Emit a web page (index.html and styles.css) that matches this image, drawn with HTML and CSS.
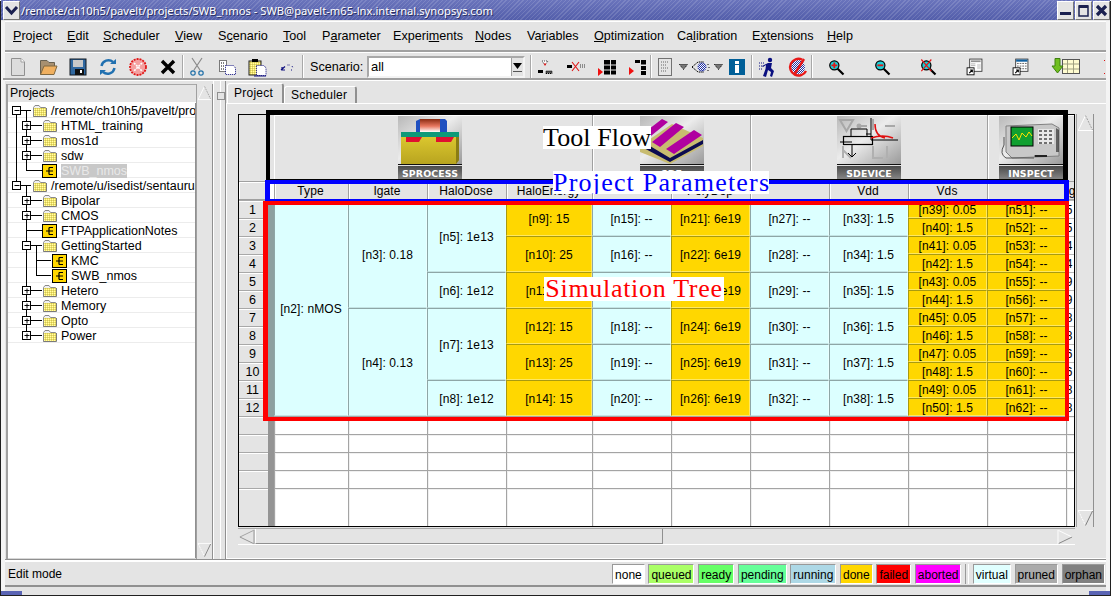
FILE: index.html
```html
<!DOCTYPE html>
<html lang="en">
<head>
<meta charset="utf-8">
<title>SWB</title>
<link rel="stylesheet" href="styles.css">
</head>
<body>
<svg class="defs" width="0" height="0" aria-hidden="true">
  <defs>
    <pattern id="dither" width="2" height="2" patternUnits="userSpaceOnUse">
      <rect width="2" height="2" fill="#f4e45c"/>
      <rect width="1" height="1" fill="#fffbb0"/>
      <rect x="1" y="1" width="1" height="1" fill="#c8c060"/>
    </pattern>
    <pattern id="gridblue" width="2" height="2" patternUnits="userSpaceOnUse">
      <rect width="2" height="2" fill="#fff"/>
      <rect width="1" height="1" fill="#2030a0"/>
      <rect x="1" y="1" width="1" height="1" fill="#2030a0"/>
    </pattern>
    <symbol id="folder" viewBox="0 0 15 15">
      <path d="M1.5 4.5 L3 2.5 H7 L8.5 4.5 H13.5 V13.5 H1.5 Z" fill="#f0f0f0" stroke="#8a8a8a"/>
      <rect x="2" y="5" width="12" height="8" fill="url(#dither)"/>
      <path d="M1.5 13.5 H14.5 V5" fill="none" stroke="#7a7a7a"/>
    </symbol>
    <symbol id="proj" viewBox="0 0 15 15">
      <rect x="0.5" y="1.5" width="14" height="13" fill="#ffd700" stroke="#000"/>
      <path d="M4 8 H7 M7 4.5 V11.5 M7 4.5 H11 M7 8 H11 M7 11.5 H11" stroke="#000" fill="none" stroke-width="1.2"/>
    </symbol>
    <g id="bp"><rect x="-4" y="-4" width="8" height="8" fill="#fff" stroke="#000"/><path d="M-2 0 H3 M0.5 -2 V3" stroke="#000"/></g>
    <g id="bm"><rect x="-4" y="-4" width="8" height="8" fill="#fff" stroke="#000"/><path d="M-2 0 H3" stroke="#000"/></g>
    <linearGradient id="toolbg" x1="0" y1="0" x2="1" y2="1">
      <stop offset="0" stop-color="#b8b8b8"/><stop offset=".45" stop-color="#ececec"/><stop offset="1" stop-color="#9a9a9a"/>
    </linearGradient>
    <linearGradient id="gate" x1="0" y1="0" x2="0" y2="1">
      <stop offset="0" stop-color="#8a2a10"/><stop offset=".55" stop-color="#e87860"/><stop offset="1" stop-color="#fff"/>
    </linearGradient>
    <linearGradient id="sub" x1="0" y1="0" x2="0" y2="1">
      <stop offset="0" stop-color="#e0cc30"/><stop offset="1" stop-color="#b8a420"/>
    </linearGradient>
  </defs>
</svg>

<div class="window">
  <header class="titlebar">
    <div class="wbtn wmenu"><svg width="15" height="13" viewBox="0 0 15 13"><path d="M2 3 L7.5 9 L13 3" fill="none" stroke="#1a2050" stroke-width="3"/></svg></div>
    <div class="wtitle">/remote/ch10h5/pavelt/projects/SWB_nmos - SWB@pavelt-m65-lnx.internal.synopsys.com</div>
    <div class="wbtn"><svg width="15" height="15" viewBox="0 0 15 15"><rect x="2" y="9" width="11" height="3" fill="#1a2050"/></svg></div>
    <div class="wbtn"><svg width="15" height="15" viewBox="0 0 15 15"><rect x="3" y="3" width="9" height="10" fill="none" stroke="#1a2050" stroke-width="1.5"/><rect x="3" y="2" width="9" height="3" fill="#1a2050"/></svg></div>
    <div class="wbtn"><svg width="15" height="15" viewBox="0 0 15 15"><path d="M3 3 L12 12 M12 3 L3 12" stroke="#1a2050" stroke-width="3.2"/></svg></div>
  </header>

  <nav class="menubar">
    <span class="m m1"><u>P</u>roject</span>
    <span class="m m2"><u>E</u>dit</span>
    <span class="m m3"><u>S</u>cheduler</span>
    <span class="m m4"><u>V</u>iew</span>
    <span class="m m5">S<u>c</u>enario</span>
    <span class="m m6"><u>T</u>ool</span>
    <span class="m m7">P<u>a</u>rameter</span>
    <span class="m m8">Experi<u>m</u>ents</span>
    <span class="m m9"><u>N</u>odes</span>
    <span class="m m10">Va<u>r</u>iables</span>
    <span class="m m11"><u>O</u>ptimization</span>
    <span class="m m12">Ca<u>l</u>ibration</span>
    <span class="m m13">E<u>x</u>tensions</span>
    <span class="m"><u>H</u>elp</span>
  </nav>

  <div class="toolbar">
    <div class="slot"><svg class="i" viewBox="0 0 24 24"><path d="M5.5 3.5 H15 L18.5 7 V20.5 H5.5 Z" fill="#dcdcdc" stroke="#909090"/><path d="M15 3.5 V7 H18.5" fill="#fff" stroke="#a0a0a0"/></svg></div>
    <div class="slot"><svg class="i" viewBox="0 0 24 24"><path d="M4.5 19.5 V5.5 H11 L13 7.5 H18.5 V11" fill="#a89070" stroke="#686050"/><path d="M4.5 19.5 L8 11 H21 L18 19.5 Z" fill="#f0b060" stroke="#806840"/></svg></div>
    <div class="slot"><svg class="i" viewBox="0 0 24 24"><rect x="4" y="4" width="16" height="16" fill="#3068a0" stroke="#101820"/><rect x="7" y="5" width="10" height="7" fill="#c8c8c8"/><rect x="9" y="14" width="9" height="6" fill="#101010"/><rect x="14" y="15" width="2" height="3" fill="#fff"/></svg></div>
    <div class="slot"><svg class="i" viewBox="0 0 24 24"><path d="M5.5 11 A7 7 0 0 1 17 7" fill="none" stroke="#2070b0" stroke-width="2.4"/><path d="M14 9 H20 V4 Z" fill="#2070b0"/><path d="M18.5 13 A7 7 0 0 1 7 17" fill="none" stroke="#2070b0" stroke-width="2.4"/><path d="M10 15 H4 V20 Z" fill="#2070b0"/></svg></div>
    <div class="slot"><svg class="i" viewBox="0 0 24 24"><circle cx="12" cy="12" r="8" fill="#f4a0a0" stroke="#e01818" stroke-width="1.8" stroke-dasharray="2 1"/><path d="M8 8 L16 16 M16 8 L8 16" stroke="#fff" stroke-width="1.6" stroke-dasharray="2 1"/></svg></div>
    <div class="slot"><svg class="i" viewBox="0 0 24 24"><path d="M6 6 L18 18 M18 6 L6 18" stroke="#000" stroke-width="3.4"/></svg></div>
    <div class="sep s1"></div>
    <div class="slot s-left"><svg class="i" viewBox="0 0 24 24"><path d="M7 3 L15 15 M17 3 L9 15" stroke="#8a8a8a" stroke-width="1.2"/><circle cx="8" cy="18" r="2.2" fill="none" stroke="#2070a8" stroke-width="1.2"/><circle cx="16" cy="18" r="2.2" fill="none" stroke="#2070a8" stroke-width="1.2"/></svg></div>
    <div class="slot"><svg class="i" viewBox="0 0 24 24"><path d="M4.5 5.5 H11.5 V16.5 H4.5 Z" fill="#fff" stroke="#000" stroke-dasharray="1 1"/><path d="M10.5 10.5 H18.5 L20.5 13 V19.5 H10.5 Z" fill="#fff" stroke="#101080" stroke-dasharray="1 1"/><path d="M6 8 H10 M6 11 H10 M6 14 H10" stroke="#000" stroke-dasharray="1 1"/></svg></div>
    <div class="slot"><svg class="i" viewBox="0 0 24 24"><rect x="4" y="6" width="12" height="14" fill="url(#dither)" stroke="#202020"/><rect x="7" y="4" width="6" height="3" fill="#000"/><path d="M11.5 10.5 H19 L21 13 V20.5 H11.5 Z" fill="#fff" stroke="#101080" stroke-dasharray="1 1"/><path d="M9 21 H21" stroke="#101080"/></svg></div>
    <div class="slot"><svg class="i" viewBox="0 0 24 24"><path d="M6 15 L10 11.5 M7 12 V15 H10" fill="none" stroke="#101080" stroke-width="1.2"/><path d="M12.5 10 L15 10 M17 11 L18 13 M16 15 H18" stroke="#101080" stroke-dasharray="1 1"/></svg></div>
    <div class="sep"></div>
    <span class="scn-label">Scenario:</span>
    <div class="combo"><span class="combo-text">all</span><span class="combo-btn"><svg width="11" height="14" viewBox="0 0 11 14"><path d="M1 3 H10 L5.5 9 Z" fill="#000"/><rect x="1" y="11" width="9" height="1" fill="#555"/></svg></span></div>
    <div class="sep s3"></div>
    <div class="slot s-left2"><svg class="i" viewBox="0 0 24 24"><path d="M9 6 H15 L12 10 Z" fill="#fff" stroke="#444" stroke-dasharray="1 1"/><path d="M10.5 8.5 H13.5 L12 11 Z" fill="#e01818"/><rect x="5" y="15" width="5" height="3" fill="#000"/><path d="M13 18.5 H19 V16 H13 Z" fill="#555" stroke="#000" stroke-dasharray="1 1"/></svg></div>
    <div class="slot w31"><svg class="i" viewBox="0 0 24 24"><rect x="3" y="10" width="5" height="3" fill="#000"/><path d="M8 7 L15 16 M15 7 L8 16" stroke="#e01818" stroke-width="1.1"/><path d="M16 10 H21 M16 12 H21" stroke="#333" stroke-dasharray="1 1"/></svg></div>
    <div class="slot w31"><svg class="i" viewBox="0 0 24 24"><path d="M3 13 L8 17 L3 21 Z" fill="#f01010"/><path d="M9 5 H15 V9.5 H9 Z M16 5 H21 V9.5 H16 Z M9 10.5 H15 V14.5 H9 Z M16 10.5 H21 V14.5 H16 Z M9 15.5 H15 V19.5 H9 Z M16 15.5 H21 V19.5 H16 Z" fill="#000"/></svg></div>
    <div class="slot"><svg class="i" viewBox="0 0 24 24"><path d="M4 12 L9 16 L4 20 Z" fill="#f01010"/><path d="M10 5 H15 V8 H10 Z M16 5 H21 V9.5 H16 Z M16 11 H21 V15 H16 Z M16 16 H21 V20 H16 Z" fill="#000"/></svg></div>
    <div class="sep s4"></div>
    <div class="slot w26"><svg class="i" viewBox="0 0 24 24"><rect x="5.5" y="3.5" width="13" height="17" fill="none" stroke="#000" stroke-dasharray="1 1"/><path d="M8 7 H16 M8 10 H13 M8 13 H16 M8 16 H13" stroke="#666" stroke-dasharray="1 1"/></svg></div>
    <div class="slot w10"><svg class="tri" viewBox="0 0 9 6"><path d="M0.5 0.5 H8.5 L4.5 5.5 Z" fill="#777" stroke="#000" stroke-dasharray="1 1"/></svg></div>
    <div class="slot w26"><svg class="i" viewBox="0 0 24 24"><path d="M3 12 L9 7 H15 M3 12 L9 17 H15" fill="none" stroke="#000" stroke-dasharray="1.5 .7"/><circle cx="13" cy="12" r="4" fill="url(#gridblue)" stroke="#2030b0" stroke-dasharray="1 1"/><path d="M19 9 V10 M20 12 V13 M19 15 V16" stroke="#000"/></svg></div>
    <div class="slot w8"><svg class="tri" viewBox="0 0 9 6"><path d="M0.5 0.5 H8.5 L4.5 5.5 Z" fill="#777" stroke="#000" stroke-dasharray="1 1"/></svg></div>
    <div class="slot w28 ml1"><svg class="i" viewBox="0 0 24 24"><rect x="4" y="4" width="16" height="16" fill="#005f98"/><rect x="10" y="6" width="4" height="3" fill="#fff"/><rect x="10" y="10" width="4" height="8" fill="#fff"/></svg></div>
    <div class="sep"></div>
    <div class="slot"><svg class="i" viewBox="0 0 24 24"><circle cx="14" cy="5" r="2.2" fill="#0a1080"/><path d="M12 8 L16 8 L15 13 L18 16 L16 22 L14 21 L15 17 L12 15 L10 22 L7 21 L9.5 14 L10 10 L7 12 L6 11 Z" fill="#0a1080"/><path d="M3 8 H8 M3 11 H6 M3 14 H7" stroke="#0a1080" stroke-dasharray="1 1"/></svg></div>
    <div class="slot"><svg class="i" viewBox="0 0 24 24"><circle cx="12" cy="12" r="7" fill="url(#gridblue)"/><path d="M16 4.5 A8.4 8.4 0 1 0 20 16 M8 20 L18 4" fill="none" stroke="#e81818" stroke-width="2.4"/></svg></div>
    <div class="sep s6"></div>
    <div class="slot w46"><svg class="sm" viewBox="0 0 24 24"><path d="M14 14 L21 21" stroke="#000" stroke-width="2.6"/><circle cx="10" cy="10" r="5.5" fill="#18d0d8" stroke="#000" stroke-width="1.5"/><path d="M6.5 10 H13.5 M10 6.5 V13.5" stroke="#e01818" stroke-width="2.2"/></svg></div>
    <div class="slot w46"><svg class="sm" viewBox="0 0 24 24"><path d="M14 14 L21 21" stroke="#000" stroke-width="2.6"/><circle cx="10" cy="10" r="5.5" fill="#18d0d8" stroke="#000" stroke-width="1.5"/><path d="M6.5 10 H13.5" stroke="#e01818" stroke-width="2.2"/></svg></div>
    <div class="slot w46"><svg class="sm" viewBox="0 0 24 24"><path d="M14 14 L21 21" stroke="#000" stroke-width="2.6"/><circle cx="10" cy="10" r="5.5" fill="#18d0d8" stroke="#000" stroke-width="1.5"/><path d="M4 3 L16 17 M16 3 L4 17" stroke="#e01818" stroke-width="1.4"/></svg></div>
    <div class="slot w46"><svg class="doc" viewBox="0 0 24 24"><rect x="6.5" y="3.5" width="14" height="14" fill="#fff" stroke="#333"/><rect x="8" y="5" width="11" height="2" fill="#909090"/><path d="M8 9 H13 M8 11 H13" stroke="#aaa"/><rect x="15" y="9" width="4" height="6" fill="#ddd"/><rect x="3.5" y="13.5" width="8" height="8" fill="#fff" stroke="#000"/><path d="M6 19.5 L9.5 16 M7 16 H9.5 V18.5" stroke="#000" fill="none" stroke-width="1.3"/></svg></div>
    <div class="slot w46"><svg class="doc" viewBox="0 0 24 24"><rect x="6.5" y="3.5" width="14" height="14" fill="#fff" stroke="#333"/><rect x="7" y="4" width="13" height="2.5" fill="#1060a0"/><path d="M8 8.5 H19 M8 11.5 H19 M8 14.5 H19" stroke="#555" stroke-dasharray="2 1"/><rect x="3.5" y="13.5" width="8" height="8" fill="#fff" stroke="#000"/><path d="M6 19.5 L9.5 16 M7 16 H9.5 V18.5" stroke="#000" fill="none" stroke-width="1.3"/></svg></div>
    <div class="slot w46"><svg class="wide" viewBox="0 0 30 24"><rect x="11.5" y="4.5" width="17" height="14" fill="#fffcd0" stroke="#555"/><path d="M16.5 5 V18 M22.5 5 V18 M12 9 H28 M12 14 H28" stroke="#a0a080"/><path d="M4 3.5 H9 V11 H12 L6.5 18 L1 11 H4 Z" fill="#70c020" stroke="#408010"/></svg></div>
    <div class="rdots"></div>
  </div>

  <div class="main">
    <section class="leftpane">
      <div class="tree-panel">
        <div class="tree-head">Projects</div>
        <div class="tree">
          <svg class="conn" viewBox="8 103 187 270" width="187" height="270">
            <path d="M16.5 110 V182 M26.5 110 V170.5 M20 110.5 H31 M30 125.5 H42 M30 140.5 H42 M30 155.5 H42 M26.5 170.5 H42 M20 185.5 H31 M26.5 185.5 V335.5 M30 200.5 H42 M30 215.5 H42 M26.5 230.5 H42 M30 245.5 H42 M36.5 245.5 V275.5 M36.5 260.5 H51 M36.5 275.5 H51 M30 290.5 H42 M30 305.5 H42 M30 320.5 H42 M30 335.5 H42" stroke="#000" fill="none" shape-rendering="crispEdges"/>
            <use href="#bm" x="16.5" y="110.5"/>
            <use href="#bp" x="26.5" y="125.5"/>
            <use href="#bp" x="26.5" y="140.5"/>
            <use href="#bp" x="26.5" y="155.5"/>
            <use href="#bm" x="16.5" y="185.5"/>
            <use href="#bp" x="26.5" y="200.5"/>
            <use href="#bp" x="26.5" y="215.5"/>
            <use href="#bm" x="26.5" y="245.5"/>
            <use href="#bp" x="26.5" y="290.5"/>
            <use href="#bp" x="26.5" y="305.5"/>
            <use href="#bp" x="26.5" y="320.5"/>
            <use href="#bp" x="26.5" y="335.5"/>
          </svg>
          <div class="tr l0"><svg class="ti"><use href="#folder"/></svg><span>/remote/ch10h5/pavelt/projects</span></div>
          <div class="tr l1"><svg class="ti"><use href="#folder"/></svg><span>HTML_training</span></div>
          <div class="tr l1"><svg class="ti"><use href="#folder"/></svg><span>mos1d</span></div>
          <div class="tr l1"><svg class="ti"><use href="#folder"/></svg><span>sdw</span></div>
          <div class="tr l1"><svg class="ti"><use href="#proj"/></svg><span class="sel">SWB_nmos</span></div>
          <div class="tr l0"><svg class="ti"><use href="#folder"/></svg><span>/remote/u/isedist/sentaurus</span></div>
          <div class="tr l1"><svg class="ti"><use href="#folder"/></svg><span>Bipolar</span></div>
          <div class="tr l1"><svg class="ti"><use href="#folder"/></svg><span>CMOS</span></div>
          <div class="tr l1"><svg class="ti"><use href="#proj"/></svg><span>FTPApplicationNotes</span></div>
          <div class="tr l1"><svg class="ti"><use href="#folder"/></svg><span>GettingStarted</span></div>
          <div class="tr l2"><svg class="ti"><use href="#proj"/></svg><span>KMC</span></div>
          <div class="tr l2"><svg class="ti"><use href="#proj"/></svg><span>SWB_nmos</span></div>
          <div class="tr l1"><svg class="ti"><use href="#folder"/></svg><span>Hetero</span></div>
          <div class="tr l1"><svg class="ti"><use href="#folder"/></svg><span>Memory</span></div>
          <div class="tr l1"><svg class="ti"><use href="#folder"/></svg><span>Opto</span></div>
          <div class="tr l1"><svg class="ti"><use href="#folder"/></svg><span>Power</span></div>
        </div>
      </div>
      <div class="vscroll vs-left">
        <svg class="arr" viewBox="0 0 17 17"><path d="M1.5 16 L8.5 1.5" stroke="#fff"/><path d="M8.5 1.5 L15.5 16" stroke="#a0a0a0" stroke-dasharray="2 1"/><path d="M1 16.5 H16" stroke="#fff"/></svg>
        <svg class="arr" viewBox="0 0 17 17"><path d="M1.5 1 L8.5 15.5" stroke="#fff" stroke-dasharray="2 1"/><path d="M15.5 1 L8.5 15.5" stroke="#808080"/><path d="M1 .5 H16" stroke="#fff"/></svg>
      </div>
    </section>
    <div class="splitter"><span class="handle"></span></div>
    <section class="rightpane">
      <div class="tabs">
        <div class="tab active">Project</div>
        <div class="tab">Scheduler</div>
      </div>
      <div class="panel">
        <div class="table">
          <div class="corner"></div>
          <div class="tool span4"><div class="toolicon">
            <svg class="toolart" viewBox="0 0 64 48"><rect width="64" height="48" fill="url(#toolbg)"/><path d="M3 21 H58 L61 17 V44 L58 48 H3 Z" fill="url(#sub)"/><path d="M58 21 L61 17 V44 L58 48 Z" fill="#8a7c14"/><path d="M3 16 H58 L61 16 V21 H3 Z" fill="#0e9a78"/><path d="M8 21 H24 L21 26 H8 Z M38 21 H56 L53 26 H38 Z" fill="#e01030"/><path d="M18 5 L22 3 V16 H18 Z M42 3 H47 L49 5 V16 H42 Z" fill="#2050c0"/><rect x="22" y="3" width="20" height="13" fill="url(#gate)"/></svg>
            <div class="toolband">SPROCESS</div></div></div>
          <div class="tool span2"><div class="toolicon">
            <svg class="toolart" viewBox="0 0 64 48"><rect width="64" height="48" fill="url(#toolbg)"/><path d="M0 30 L32 8 L63 22 L63 30 L30 48 L0 36 Z" fill="#c8bc70"/><path d="M0 24 L30 42 L63 24 V28 L30 46 L0 30 Z" fill="#0c0c50"/><path d="M0 20 L22 3 L28 6 L6 24 Z M12 26 L36 7 L44 11 L20 31 Z M26 33 L54 14 L62 19 L34 38 Z" fill="#b000a0"/></svg>
            <div class="toolband">SDE</div></div></div>
          <div class="tool span3"><div class="toolicon">
            <svg class="toolart" viewBox="0 0 64 48"><rect width="64" height="48" fill="url(#toolbg)"/><path d="M3 4 H16 L9.5 15 Z M24 10 H30 M36 3 V14 M48 10 H58" fill="none" stroke="#a8a8a8" stroke-width="2"/><circle cx="22" cy="10" r="2.5" fill="#a8a8a8"/><path d="M6 30 V42 M6 34 L14 42 M36 30 V42 H46 M50 30 V42" stroke="#b0b0b0" stroke-width="2" fill="none"/><path d="M34 2 V24 H61 M15 26 H3 M29 18 H34" fill="none" stroke="#000"/><rect x="6.5" y="20.5" width="29" height="8" fill="none" stroke="#000" stroke-width="1.2"/><path d="M14 13 H30 V20 M15 28 V40 M11 37 L15 41 L19 37 M14 13 V20" fill="none" stroke="#000"/><path d="M34 22 Q46 18 56 22 M38 8 Q38 20 48 22" fill="none" stroke="#e01010" stroke-width="1.5"/></svg>
            <div class="toolband">SDEVICE</div></div></div>
          <div class="tool span2"><div class="toolicon">
            <svg class="toolart" viewBox="0 0 64 48"><rect width="64" height="48" fill="url(#toolbg)"/><path d="M7 10 L53 8 L60 12 V40 L13 42 L7 36 Z" fill="#c8c8c8" stroke="#808080"/><rect x="12" y="11" width="22" height="19" fill="#10a030" stroke="#000"/><path d="M13 22 L17 18 L20 24 L23 17 L27 21 L30 16 L33 20" stroke="#ffe000" fill="none"/><path d="M39 13 H55 V28 H39 Z" fill="#e8e8e8"/><path d="M40 15 H54 M40 19 H54 M40 23 H54 M40 27 H54" stroke="#707070" stroke-width="2" stroke-dasharray="3 2"/><path d="M57 12 L60 14 V36 H57 Z" fill="#333" opacity=".7"/><path d="M5 21 V29 Q0 38 7 42 H35 M35 40 H48" fill="none" stroke="#555"/><rect x="36" y="39" width="12" height="2" fill="#222"/></svg>
            <div class="toolband">INSPECT</div></div></div>

          <div class="h hc"></div>
          <div class="h">Type</div><div class="h">Igate</div><div class="h">HaloDose</div><div class="h">HaloEnergy</div><div class="h"></div><div class="h">PolyDop</div><div class="h"></div><div class="h">Vdd</div><div class="h">Vds</div><div class="h"></div><div class="h p">ig</div>

          <div class="n">1</div><div class="s sp12"></div><div class="c sp12">[n2]: nMOS</div><div class="c sp6">[n3]: 0.18</div><div class="c sp4">[n5]: 1e13</div><div class="g sp2">[n9]: 15</div><div class="c sp2">[n15]: --</div><div class="g sp2">[n21]: 6e19</div><div class="c sp2">[n27]: --</div><div class="c sp2">[n33]: 1.5</div><div class="g">[n39]: 0.05</div><div class="g">[n51]: --</div><div class="p">55</div>
          <div class="n">2</div><div class="g">[n40]: 1.5</div><div class="g">[n52]: --</div><div class="p">55</div>
          <div class="n">3</div><div class="g sp2">[n10]: 25</div><div class="c sp2">[n16]: --</div><div class="g sp2">[n22]: 6e19</div><div class="c sp2">[n28]: --</div><div class="c sp2">[n34]: 1.5</div><div class="g">[n41]: 0.05</div><div class="g">[n53]: --</div><div class="p">44</div>
          <div class="n">4</div><div class="g">[n42]: 1.5</div><div class="g">[n54]: --</div><div class="p">44</div>
          <div class="n">5</div><div class="c sp2">[n6]: 1e12</div><div class="g sp2">[n11]: 15</div><div class="c sp2">[n17]: --</div><div class="g sp2">[n23]: 6e19</div><div class="c sp2">[n29]: --</div><div class="c sp2">[n35]: 1.5</div><div class="g">[n43]: 0.05</div><div class="g">[n55]: --</div><div class="p">99</div>
          <div class="n">6</div><div class="g">[n44]: 1.5</div><div class="g">[n56]: --</div><div class="p">99</div>
          <div class="n">7</div><div class="c sp6">[n4]: 0.13</div><div class="c sp4">[n7]: 1e13</div><div class="g sp2">[n12]: 15</div><div class="c sp2">[n18]: --</div><div class="g sp2">[n24]: 6e19</div><div class="c sp2">[n30]: --</div><div class="c sp2">[n36]: 1.5</div><div class="g">[n45]: 0.05</div><div class="g">[n57]: --</div><div class="p">88</div>
          <div class="n">8</div><div class="g">[n46]: 1.5</div><div class="g">[n58]: --</div><div class="p">88</div>
          <div class="n">9</div><div class="g sp2">[n13]: 25</div><div class="c sp2">[n19]: --</div><div class="g sp2">[n25]: 6e19</div><div class="c sp2">[n31]: --</div><div class="c sp2">[n37]: 1.5</div><div class="g">[n47]: 0.05</div><div class="g">[n59]: --</div><div class="p">66</div>
          <div class="n">10</div><div class="g">[n48]: 1.5</div><div class="g">[n60]: --</div><div class="p">66</div>
          <div class="n">11</div><div class="c sp2">[n8]: 1e12</div><div class="g sp2">[n14]: 15</div><div class="c sp2">[n20]: --</div><div class="g sp2">[n26]: 6e19</div><div class="c sp2">[n32]: --</div><div class="c sp2">[n38]: 1.5</div><div class="g">[n49]: 0.05</div><div class="g">[n61]: --</div><div class="p">88</div>
          <div class="n">12</div><div class="g">[n50]: 1.5</div><div class="g">[n62]: --</div><div class="p">88</div>

          <div class="n"></div><div class="s e-s sp5"></div><div class="e"></div><div class="e"></div><div class="e"></div><div class="e"></div><div class="e"></div><div class="e"></div><div class="e"></div><div class="e"></div><div class="e"></div><div class="e"></div><div class="e"></div>
          <div class="n"></div><div class="e"></div><div class="e"></div><div class="e"></div><div class="e"></div><div class="e"></div><div class="e"></div><div class="e"></div><div class="e"></div><div class="e"></div><div class="e"></div><div class="e"></div>
          <div class="n"></div><div class="e"></div><div class="e"></div><div class="e"></div><div class="e"></div><div class="e"></div><div class="e"></div><div class="e"></div><div class="e"></div><div class="e"></div><div class="e"></div><div class="e"></div>
          <div class="n"></div><div class="e"></div><div class="e"></div><div class="e"></div><div class="e"></div><div class="e"></div><div class="e"></div><div class="e"></div><div class="e"></div><div class="e"></div><div class="e"></div><div class="e"></div>
          <div class="n"></div><div class="e"></div><div class="e"></div><div class="e"></div><div class="e"></div><div class="e"></div><div class="e"></div><div class="e"></div><div class="e"></div><div class="e"></div><div class="e"></div><div class="e"></div>
        </div>
        <div class="vscroll vs-right">
          <svg class="arr" viewBox="0 0 17 17"><path d="M1.5 16 L8.5 1.5" stroke="#fff"/><path d="M8.5 1.5 L15.5 16" stroke="#a0a0a0" stroke-dasharray="2 1"/><path d="M1 16.5 H16" stroke="#fff"/></svg>
          <svg class="arr" viewBox="0 0 17 17"><path d="M1.5 1 L8.5 15.5" stroke="#fff" stroke-dasharray="2 1"/><path d="M15.5 1 L8.5 15.5" stroke="#808080"/><path d="M1 .5 H16" stroke="#fff"/></svg>
        </div>
        <div class="hscroll">
          <svg class="arr" viewBox="0 0 17 17"><path d="M16 1.5 L1.5 8.5" stroke="#a0a0a0"/><path d="M1.5 8.5 L16 15.5" stroke="#909090"/><path d="M16.5 1 V16" stroke="#909090"/></svg>
          <div class="hthumb"></div>
          <svg class="arr harr" viewBox="0 0 17 17"><path d="M1 1.5 L15.5 8.5" stroke="#fff"/><path d="M1 15.5 L15.5 8.5" stroke="#808080"/><path d="M.5 1 V16" stroke="#fff"/></svg>
        </div>
      </div>
    </section>
  </div>

  <footer class="statusbar">
    <span class="mode">Edit mode</span>
    <div class="legend">
      <span class="chip none">none</span>
      <span class="chip queued">queued</span>
      <span class="chip ready">ready</span>
      <span class="chip pending">pending</span>
      <span class="chip running">running</span>
      <span class="chip done">done</span>
      <span class="chip failed">failed</span>
      <span class="chip aborted">aborted</span>
      <span class="lsep"></span>
      <span class="chip virtual">virtual</span>
      <span class="chip pruned">pruned</span>
      <span class="chip orphan">orphan</span>
    </div>
  </footer>
  <div class="corner-bl"></div>
  <div class="corner-br"></div>
</div>

<div class="frame f-black"></div>
<div class="frame f-blue"></div>
<div class="frame f-red"></div>
<div class="note n-tool">Tool Flow</div>
<div class="note n-param">Project Parameters</div>
<div class="note n-sim">Simulation Tree</div>
</body>
</html>
```

FILE: styles.css
```css
* { box-sizing: border-box; }
html, body { margin: 0; padding: 0; }
body {
  position: relative;
  width: 1113px;
  height: 596px;
  overflow: hidden;
  background: #fff;
  font-family: "Liberation Sans", Arial, sans-serif;
  font-size: 12px;
  color: #000;
}
.defs { position: absolute; }

.window {
  position: relative;
  width: 1109px;
  height: 595px;
  margin-left: 1px;
  background: #e4e4e4;
  border-left: 4px solid #f4f4f4;
  border-right: 4px solid #f4f4f4;
  box-shadow: 1px 1px 0 #202020, -1px 1px 0 #202020;
  display: flex;
  flex-direction: column;
}

/* title bar */
.titlebar {
  height: 21px;
  margin: 0 -4px;
  padding: 1px 0 0 0;
  display: flex;
  align-items: stretch;
  gap: 1px;
  background:
    repeating-linear-gradient(135deg, rgba(255,255,255,.13) 0 1px, rgba(255,255,255,0) 1px 3px),
    linear-gradient(180deg, #6a74bc 0, #535eaa 100%);
  border-bottom: 1px solid #e8e8e8;
}
.wbtn {
  width: 17px;
  flex: none;
  background: #e4e4e4;
  border: 1px solid #fff;
  border-right-color: #777;
  border-bottom-color: #777;
  display: flex;
  align-items: center;
  justify-content: center;
}
.wmenu { margin-left: 2px; }
.wtitle {
  flex: 1;
  color: #fff;
  font-family: "Noto Sans", sans-serif;
  font-size: 11.2px;
  line-height: 20px;
  white-space: nowrap;
  text-shadow: 1px 1px 0 #2a2f60;
}

/* menu */
.menubar {
  height: 31px;
  display: flex;
  align-items: center;
  padding: 0 0 1px 8px;
  font-size: 12.6px;
  border-top: 1px solid #fff;
  border-bottom: 2px solid #a0a0a0;
  box-shadow: 0 1px 0 #fff;
}
.m { white-space: nowrap; }
.m1 { width: 54px; } .m2 { width: 36px; } .m3 { width: 72px; } .m4 { width: 43px; }
.m5 { width: 65px; } .m6 { width: 39px; } .m7 { width: 71px; } .m8 { width: 82px; }
.m9 { width: 52px; } .m10 { width: 67px; } .m11 { width: 83px; } .m12 { width: 75px; }
.m13 { width: 75px; }

/* toolbar */
.toolbar {
  height: 27px;
  margin: 1px 0 0 -2px;
  display: flex;
  align-items: center;
  padding-top: 2px;
  border-bottom: 2px solid #a0a0a0;
}
.slot { width: 30px; height: 24px; flex: none; display: flex; align-items: center; justify-content: center; }
.s-left { margin-left: -2px; }
.s-left2 { margin-left: -2px; }
.w31 { width: 31px; }
.w26 { width: 26px; } .w10 { width: 10px; } .w8 { width: 8px; } .w28 { width: 28px; } .w46 { width: 46px; }
.ml1 { margin-left: 1px; }
.i { width: 24px; height: 24px; flex: none; }
.sm { width: 20px; height: 20px; flex: none; }
.doc { width: 21px; height: 21px; flex: none; }
.wide { width: 30px; height: 24px; flex: none; }
.tri { width: 9px; height: 6px; flex: none; }
.sep { width: 2px; height: 23px; flex: none; background: #a8a8a8; border-right: 1px solid #fff; }
.s1 { margin-left: -1px; }
.s3 { margin-left: 5px; }
.s4 { margin-left: -2px; }
.s6 { margin-left: -2px; }
.scn-label { margin-left: 6px; font-size: 12.6px; width: 57px; flex: none; }
.combo {
  width: 158px;
  height: 22px;
  flex: none;
  background: #fff;
  border: 2px solid #a8a8a8;
  border-right-color: #f4f4f4;
  border-bottom-color: #f4f4f4;
  display: flex;
  align-items: center;
  justify-content: space-between;
  font-size: 13px;
  padding-left: 2px;
}
.combo-btn { width: 12px; height: 18px; background: #e4e4e4; border-left: 1px solid #a0a0a0; display: flex; align-items: center; justify-content: center; }
.rdots { width: 1px; height: 14px; margin-left: auto; margin-right: 1px; border-top: 1px solid #e01010; border-bottom: 1px solid #e01010; }

/* main */
.main {
  height: 480px;
  display: flex;
  border-top: 1px solid #fff;
  border-bottom: 1px solid #909090;
  box-shadow: 0 1px 0 #fff;
}
.leftpane { width: 208px; flex: none; display: flex; padding-left: 3px; padding-top: 3px; }
.tree-panel {
  width: 188px;
  flex: none;
  background: #fff;
  box-shadow: -2px 0 0 #a0a0a0;
  border-bottom: 1px solid #d8d8d8;
  display: flex;
  flex-direction: column;
}
.tree-head { height: 19px; flex: none; background: #e4e4e4; border-bottom: 1px solid #fff; padding-left: 2px; line-height: 18px; font-size: 12.3px; box-shadow: inset 0 1px 0 #a8a8a8; }
.tree { position: relative; flex: 1; overflow: hidden; background: #fff; border-right: 1px solid #909090; }
.conn { position: absolute; left: 0; top: 0; }
.tr { height: 15px; display: flex; align-items: center; white-space: nowrap; border-bottom: 1px solid #ececec; font-size: 12.5px; }
.tr span { position: relative; top: 1px; }
.l0 { padding-left: 24px; } .l1 { padding-left: 34px; } .l2 { padding-left: 44px; }
.ti { width: 15px; height: 15px; margin-right: 4px; flex: none; }
.sel { background: #c8c8c8; color: #e8e8e8; }

.vscroll { display: flex; flex-direction: column; justify-content: space-between; background: #e4e4e4; border-right: 1px solid #909090; border-left: 1px solid #a0a0a0; }
.vs-left { width: 17px; flex: none; }
.arr { width: 17px; height: 17px; display: block; flex: none; }
.vs-left .arr { width: 15px; }
.splitter { width: 13px; flex: none; position: relative; border-left: 1px solid #fff; border-right: 1px solid #909090; padding-left: 3px; padding-top: 11px; background: linear-gradient(90deg, #e4e4e4 0 6px, #fff 6px 7px, #e4e4e4 7px); }
.handle { display: block; width: 8px; height: 8px; background: #e4e4e4; border: 1px solid #909090; }

.rightpane { flex: 1; display: flex; flex-direction: column; min-width: 0; padding-top: 2px; }
.tabs { height: 20px; flex: none; display: flex; align-items: flex-end; padding-left: 1px; }
.tab { height: 17px; padding: 0 6px; border: 1px solid #fff; border-bottom: 0; border-right: 2px solid #909090; border-top-right-radius: 3px; border-top-left-radius: 3px; line-height: 16px; letter-spacing: .25px; width: 73px; }
.tab.active { height: 20px; width: 57px; line-height: 19px; }
.panel {
  flex: 1;
  display: grid;
  grid-template-columns: 837px 18px;
  grid-template-rows: 413px 17px;
  column-gap: 1px;
  row-gap: 1px;
  padding: 10px 0 0 11px;
  border-left: 1px solid #fff;
  border-top: 1px solid #fff;
  border-bottom: 1px solid #fff;
}

/* spreadsheet */
.table {
  border: 1px solid #000;
  background: #fff;
  overflow: hidden;
  letter-spacing: .1px;
  display: grid;
  grid-template-columns: 29px 6px 74px 79px 79px 86px 79px 79px 79px 79px 79px 79px 8px;
  grid-template-rows: 67px 18px repeat(12, 18px) repeat(4, 18px) 38px;
}
.table > div { min-width: 0; }
.corner { grid-column: span 2; background: #e4e4e4; border-bottom: 1px solid #a0a0a0; }
.tool { background: #e4e4e4; border-left: 1px solid #a0a0a0; box-shadow: inset 1px 1px 0 #fff; border-bottom: 1px solid #a0a0a0; display: flex; justify-content: center; padding-top: 1px; }
.span4 { grid-column: span 4; border-left: 0; padding-right: 6px; }
.span3 { grid-column: span 3; }
.span2 { grid-column: span 2; }
.toolicon { width: 64px; height: 65px; flex: none; }
.toolart { width: 64px; height: 48px; display: block; }
.toolband {
  height: 16px;
  border-top: 1px solid #101010;
  background: linear-gradient(180deg, #e0e0e0 0 1px, #4a4a4a 1px, #8a8a8a 100%);
  color: #fff;
  font-family: "DejaVu Sans", sans-serif;
  font-weight: 700;
  font-size: 9.4px;
  line-height: 17px;
  text-align: center;
}
.h { background: #e4e4e4; border-left: 1px solid #a0a0a0; border-bottom: 1px solid #a0a0a0; box-shadow: inset 1px 1px 0 #fff; display: flex; align-items: center; justify-content: center; white-space: nowrap; overflow: hidden; padding: 1px 2px 0 0; }
.hc { grid-column: span 2; border-left: 0; background: linear-gradient(90deg, #e4e4e4 0 31px, #fff 31px); }
.n { background: #e4e4e4; border-top: 1px solid #a8a8a8; box-shadow: inset 0 1px 0 #fff; display: flex; align-items: center; justify-content: center; font-size: 12.5px; padding: 1px 2px 0 0; }
.s { background: #8ca0a0; }
.e-s { background: #949494; }
.sp12 { grid-row: span 12; } .sp6 { grid-row: span 6; } .sp5 { grid-row: span 5; } .sp4 { grid-row: span 4; } .sp2 { grid-row: span 2; }
.c, .g { display: flex; align-items: center; justify-content: center; white-space: nowrap; overflow: hidden; padding-top: 1px; }
.c { background: #dcffff; border: 1px solid #e8ffff; border-top-color: #8ea6a6; border-left-color: #8ea6a6; border-bottom-color: #c4e4e4; }
.g { background: #ffd700; border: 1px solid #ffe860; border-top-color: #a89a10; border-left-color: #a89a10; }
.p { display: flex; align-items: center; justify-content: flex-start; overflow: hidden; white-space: nowrap; background: #fff; border-top: 1px solid #b8b8b8; text-indent: -7px; border-left: 0; padding-top: 1px; }
.h.p { background: #e4e4e4; text-indent: 0; justify-content: flex-start; box-shadow: none; border-top: 0; }
.e { background: #fff; border-left: 1px solid #a4a4a4; border-top: 1px solid #a4a4a4; box-shadow: inset 1px 1px 0 #f0f0f0; }

.vs-right { height: 413px; width: 18px; }
.hscroll { grid-column: 1; display: flex; background: #e4e4e4; border-bottom: 1px solid #fff; border-top: 1px solid #a8a8a8; position: relative; height: 17px; }
.hscroll .arr { height: 16px; }
.hthumb { width: 408px; background: #e4e4e4; border-right: 1px solid #909090; border-bottom: 1px solid #909090; border-left: 1px solid #fff; }
.harr { margin-left: auto; margin-right: 1px; }

/* status */
.statusbar {
  height: 26px;
  margin-top: 1px;
  display: flex;
  align-items: center;
  justify-content: space-between;
  padding-left: 3px;
  border-bottom: 2px solid #909090;
  border-top: 1px solid #fff;
}
.mode { padding-top: 1px; }
.legend { display: flex; align-items: center; gap: 3.7px; margin-right: 1px; }
.chip { height: 20px; line-height: 20px; padding: 0 2px; border: 1px solid #fff; border-top-color: #999; border-left-color: #999; white-space: nowrap; }
.none { background: #fff; } .queued { background: #aaff66; } .ready { background: #66ff66; }
.pending { background: #66ff99; } .running { background: #add8e6; } .done { background: #ffd700; }
.failed { background: #ff0000; } .aborted { background: #ff00ff; } .virtual { background: #e0ffff; }
.pruned { background: #aaaaaa; } .orphan { background: #808080; }
.lsep { width: 4px; height: 20px; background: #e4e4e4; border-left: 1px solid #999; border-right: 1px solid #fff; }
.corner-bl, .corner-br { position: absolute; bottom: 0; height: 4px; width: 21px; background: #5a64b4; }
.corner-bl { left: -4px; }
.corner-br { right: -4px; }

/* annotation overlay */
.frame { position: absolute; background: transparent; }
.f-black { left: 266px; top: 110px; width: 802px; height: 74px; border: 5px solid #000; border-left-width: 4px; }
.f-blue { left: 265px; top: 180px; width: 804px; height: 23px; border: 4px solid #0000ff; border-left-width: 5px; border-right-width: 5px; }
.f-red { left: 263px; top: 201px; width: 806px; height: 220px; border: 4px solid #ff0000; border-left-width: 5px; }
.note { position: absolute; background: #fff; font-family: "Liberation Serif", "Times New Roman", serif; font-size: 26px; white-space: nowrap; text-align: center; overflow: hidden; }
.n-tool { left: 543px; top: 126px; width: 108px; height: 23px; line-height: 23px; color: #000; letter-spacing: .1px; }
.n-param { left: 553px; top: 171px; width: 216px; height: 23px; line-height: 23px; color: #0000ff; letter-spacing: 1.2px; }
.n-sim { left: 544px; top: 277px; width: 180px; height: 24px; line-height: 24px; color: #ff0000; letter-spacing: .7px; }
```
